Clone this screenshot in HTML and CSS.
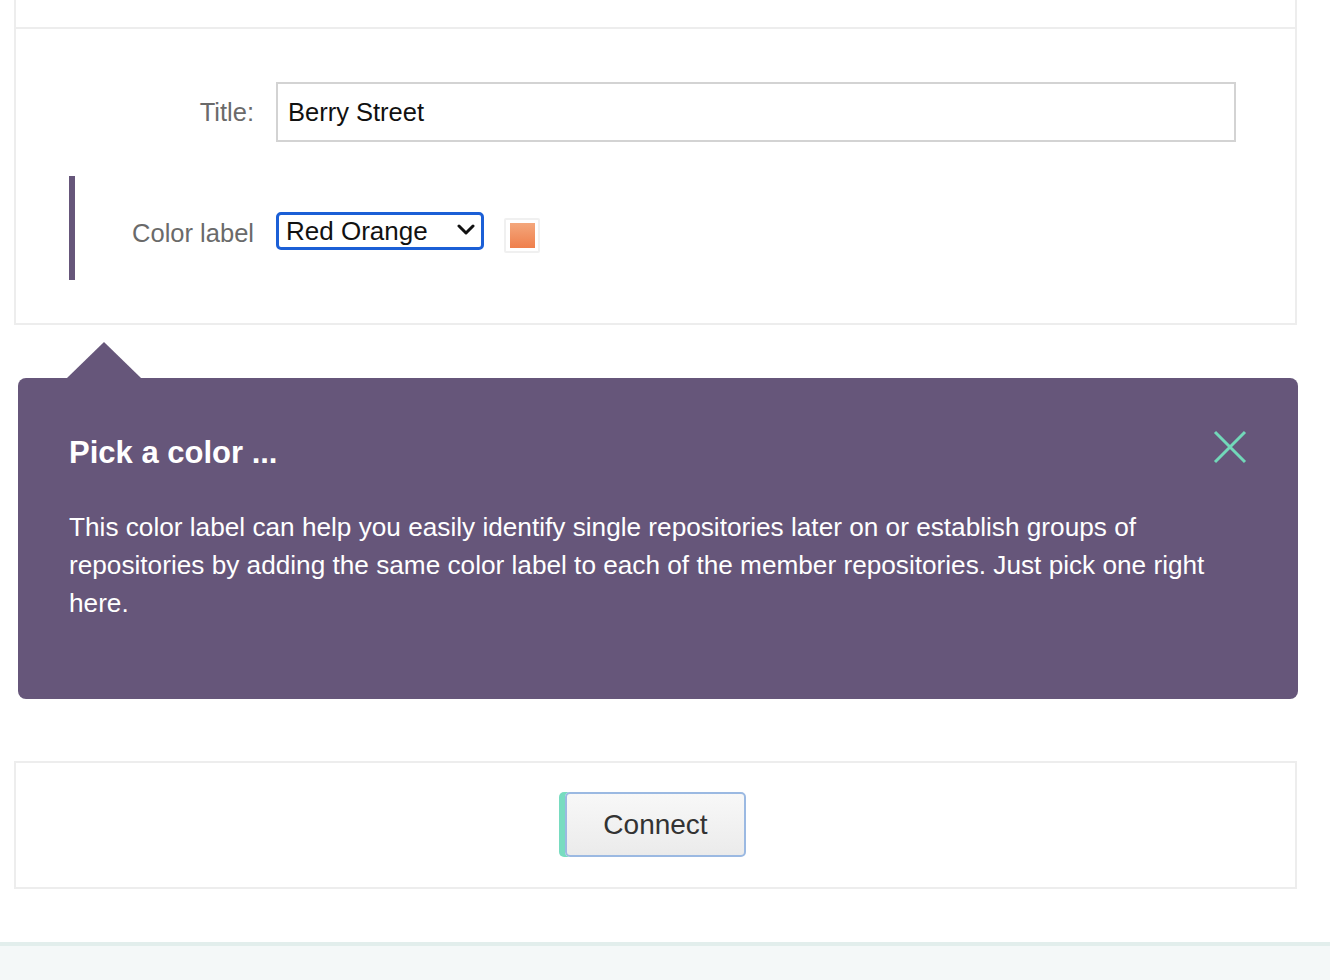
FILE: index.html
```html
<!DOCTYPE html>
<html lang="en">
<head>
<meta charset="utf-8">
<title>Connect repository</title>
<link rel="stylesheet" href="styles.css">
</head>
<body>
<div class="page">
  <div class="panel panel-top"></div>

  <div class="panel panel-form">
    <div class="row">
      <label class="label" for="title">Title:</label>
      <input class="text-input" id="title" type="text" value="Berry Street">
    </div>
    <div class="row row-highlight">
      <label class="label label-offset" for="color">Color label</label>
      <div class="select-wrap">
        <select class="select" id="color">
          <option>Red Orange</option>
        </select>
        <svg class="chevron" width="18" height="12" viewBox="0 0 18 12"><path d="M2 2 L9 9 L16 2" fill="none" stroke="#111" stroke-width="3" stroke-linecap="round" stroke-linejoin="round"/></svg>
      </div>
      <span class="swatch"><span class="swatch-fill"></span></span>
    </div>
  </div>

  <div class="tooltip">
    <h2 class="tooltip-title">Pick a color ...</h2>
    <p class="tooltip-text">This color label can help you easily identify single repositories later on or establish groups of repositories by adding the same color label to each of the member repositories. Just pick one right here.</p>
    <button class="close" aria-label="Close">
      <svg width="34" height="34" viewBox="0 0 34 34"><path d="M2 2 L32 32 M32 2 L2 32" stroke="#72d8b9" stroke-width="3" fill="none"/></svg>
    </button>
  </div>

  <div class="panel panel-actions">
    <button class="btn">Connect</button>
  </div>
</div>
<footer class="footer"></footer>
</body>
</html>
```
FILE: styles.css
```css
* { box-sizing: border-box; }

html, body {
  margin: 0;
  padding: 0;
  background: #ffffff;
  font-family: "Liberation Sans", Arial, Helvetica, sans-serif;
}

.page {
  width: 1283px;
  margin-left: 14px;
  display: flex;
  flex-direction: column;
}

.panel {
  border: 2px solid #ededed;
  background: #fff;
}

.panel-top {
  border-top: none;
  height: 29px;
}

.panel-form {
  border-top: none;
  padding: 53px 0 43px 0;
  display: flex;
  flex-direction: column;
  gap: 34px;
}

.row {
  display: flex;
  align-items: center;
  margin-left: 53px;
  border-left: 6px solid transparent;
}

.row-highlight {
  border-left-color: #66567a;
  height: 104px;
  padding-top: 5px;
}

.label {
  width: 201px;
  padding-right: 22px;
  text-align: right;
  font-size: 25.5px;
  color: #6a6a6a;
}

.label-offset {
  padding-top: 5px;
}

.text-input {
  width: 960px;
  height: 60px;
  border: 2px solid #d3d3d3;
  padding: 0 10px;
  font-family: "Liberation Sans", Arial, sans-serif;
  font-size: 25.5px;
  color: #111;
  outline: none;
}

.select-wrap {
  position: relative;
  width: 208px;
  height: 38px;
}

.select {
  appearance: none;
  -webkit-appearance: none;
  width: 100%;
  height: 100%;
  border: 3px solid #1b5fd6;
  border-radius: 5px;
  background: #fff;
  padding: 0 0 0 7px;
  font-family: "Liberation Sans", Arial, sans-serif;
  font-size: 26px;
  color: #111;
}

.chevron {
  position: absolute;
  right: 9px;
  top: 12px;
  pointer-events: none;
}

.swatch {
  margin-left: 20px;
  margin-top: 10px;
  width: 36px;
  height: 35px;
  border: 2px solid #f0f0f0;
  border-radius: 2px;
  display: flex;
  align-items: center;
  justify-content: center;
}

.swatch-fill {
  width: 25px;
  height: 25px;
  background: linear-gradient(#f4a77c, #ef7f4c);
}

.tooltip {
  position: relative;
  margin: 53px 0 0 4px;
  width: 1280px;
  background: #66567a;
  border-radius: 8px;
  padding: 57px 51px 77px 51px;
  color: #fff;
}

.tooltip::before {
  content: "";
  position: absolute;
  left: 49px;
  top: -36px;
  border-left: 37px solid transparent;
  border-right: 37px solid transparent;
  border-bottom: 36px solid #66567a;
}

.tooltip-title {
  margin: 0;
  font-size: 31px;
  line-height: 36px;
  font-weight: bold;
}

.tooltip-text {
  margin: 37px 0 0 0;
  font-size: 26.2px;
  line-height: 38px;
}

.close {
  position: absolute;
  top: 52px;
  right: 51px;
  width: 34px;
  height: 34px;
  padding: 0;
  border: none;
  background: transparent;
}

.close svg { display: block; }

.panel-actions {
  margin-top: 62px;
  padding: 29px 0 30px 0;
  display: flex;
  justify-content: center;
}

.btn {
  width: 181px;
  height: 65px;
  border: 2px solid #9bb9e2;
  border-radius: 5px;
  box-shadow: -6px 0 0 #78dcc0;
  background: linear-gradient(#f8f8f8, #ebebeb);
  font-family: "Liberation Sans", Arial, sans-serif;
  font-size: 28px;
  color: #333;
}

.footer {
  margin-top: 53px;
  height: 38px;
  border-top: 4px solid #e2eeec;
  background: #f4f8f8;
}
```
